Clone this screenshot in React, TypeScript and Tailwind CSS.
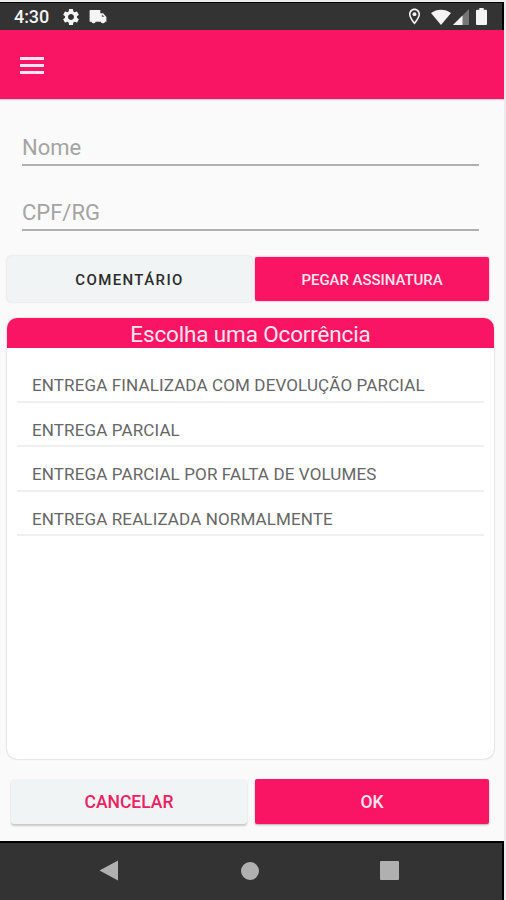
import React, { useState } from "react";
import { MdOutlineLocationOn, MdSettings } from "react-icons/md";

const ocorrencias = [
  "ENTREGA FINALIZADA COM DEVOLUÇÃO PARCIAL",
  "ENTREGA PARCIAL",
  "ENTREGA PARCIAL POR FALTA DE VOLUMES",
  "ENTREGA REALIZADA NORMALMENTE",
];

function StatusBar() {
  return (
    <div className="flex h-7 shrink-0 items-center border-t border-r-2 border-black bg-[#333333] text-[#f4f4f4]">
      <span className="ml-[14px] w-[47px] text-[18px] leading-7 font-medium tracking-[-0.1px]">
        4:30
      </span>
      <MdSettings className="size-5" />
      {/* caminhão */}
      <svg className="ml-2 h-[14px] w-[18px]" viewBox="0 0 18 15" fill="currentColor">
        <path d="M1 0H11.500V3.500H14.500L18 7.500V12.500H16.500A2.300 2.300 0 0 1 12 12.500H6.500A2.300 2.300 0 0 1 2 12.500H0V1Q0 0 1 0Z" />
        <path d="M13 5H14L16 7.500H13Z" fill="#777777" />
      </svg>
      <div className="mr-[15px] ml-auto flex items-center">
        <MdOutlineLocationOn className="mr-[7px] size-[19px]" />
        {/* Wi-Fi */}
        <svg className="h-4 w-5" viewBox="0 0 20 16" fill="currentColor">
          <path d="M0 4C5.500-0.500 14.500-0.500 20 4L10 16Z" />
        </svg>
        {/* sinal */}
        <svg className="ml-0.5 h-4 w-4" viewBox="0 0 16 16" fill="currentColor">
          <path d="M16 0V16H0Z" opacity="0.35" />
          <path d="M9.500 6.500V16H0Z" />
        </svg>
        {/* bateria */}
        <svg className="ml-[7px] h-[17px] w-[11px]" viewBox="0 0 11 17" fill="currentColor">
          <path d="M3.300 0H7.700V1.700H10Q11 1.700 11 2.700V16Q11 17 10 17H1Q0 17 0 16V2.700Q0 1.700 1 1.700H3.300Z" />
        </svg>
      </div>
    </div>
  );
}

function Campo({ placeholder }: { placeholder: string }) {
  const [valor, setValor] = useState("");
  return (
    <input
      value={valor}
      onChange={(e) => setValor(e.target.value)}
      placeholder={placeholder}
      className="block h-9 w-full border-b-2 border-[#b0b0b0] bg-transparent pt-0.5 pb-0.5 text-[22px] leading-7 outline-none placeholder:text-[#a4a4a4]"
    />
  );
}

export default function App() {
  return (
    <div className="h-[900px] w-[506px] overflow-hidden bg-[#ececee] pt-0.5 font-[Roboto,sans-serif]">
      <div className="flex h-full w-[504px] flex-col bg-[#fafafa]">
        <StatusBar />

        <header className="flex h-[69px] shrink-0 items-center bg-[#fa1464] shadow-[0_1px_1px_rgba(0,0,0,0.15)]">
          <button className="mt-0.5 ml-5 flex w-6 flex-col gap-1" aria-label="Menu">
            <span className="h-[3px] w-full bg-[#ffe6ee]" />
            <span className="h-[3px] w-full bg-[#ffe6ee]" />
            <span className="h-[3px] w-full bg-[#ffe6ee]" />
          </button>
        </header>

        <div className="flex flex-col gap-[29px] pt-[31px] pr-[25px] pl-[22px]">
          <Campo placeholder="Nome" />
          <Campo placeholder="CPF/RG" />
        </div>

        <div className="mt-[25px] flex items-start gap-[3px] pr-[15px] pl-[7px] text-[15px] font-medium">
          <button className="h-[46px] w-[245px] rounded-[4px] bg-[#f1f4f5] pt-0.5 tracking-[1.4px] text-[#2c2c2c] shadow-[0_0_2px_rgba(0,0,0,0.18)]">
            COMENTÁRIO
          </button>
          <button className="mt-px h-11 flex-1 rounded-[2px] bg-[#fa1464] pt-0.5 tracking-[-0.05px] text-[#ffe4ed] shadow-[0_0_2px_rgba(250,20,100,0.5)]">
            PEGAR ASSINATURA
          </button>
        </div>

        <section className="mt-4 mr-[10px] ml-[7px] h-[441px] overflow-hidden rounded-[10px] bg-white shadow-[0_0_2px_rgba(0,0,0,0.28)]">
          <h2 className="h-[30px] bg-[#fa1464] text-center text-[22.5px] leading-[33px] tracking-[-0.15px] text-[#ffe4ed]">
            Escolha uma Ocorrência
          </h2>
          <ul className="mt-[10px] mr-[10px] ml-[10px]">
            {ocorrencias.map((item) => (
              <li
                key={item}
                className="h-[44.5px] border-b-2 border-[#efefef] pt-[17px] pl-[15px] text-[17px] leading-5 tracking-[0.13px] text-[#666666]"
              >
                {item}
              </li>
            ))}
          </ul>
        </section>

        <div className="mt-5 flex gap-2 pr-[15px] pl-[11px] text-[17.5px] font-medium">
          <button className="h-[45px] w-[236px] rounded-[3px] bg-[#f1f4f5] pt-0.5 text-[#ec2163] shadow-[0_2px_2px_rgba(0,0,0,0.2)]">
            CANCELAR
          </button>
          <button className="h-[45px] flex-1 rounded-[2px] bg-[#fa1464] pt-0.5 text-[#ffe4ed] shadow-[0_1px_2px_rgba(0,0,0,0.3)]">
            OK
          </button>
        </div>

        <nav className="mt-auto flex h-[59px] items-center border-t-2 border-r-2 border-black bg-[#333333] pb-0.5 pl-[99px] text-[#b0b0b0]">
          <svg className="h-[21px] w-[19px]" viewBox="0 0 19 21" fill="currentColor">
            <path d="M19 0.500V20.500L0.500 10.500Z" />
          </svg>
          <span className="ml-[123px] size-[18px] rounded-full bg-[#b0b0b0]" />
          <span className="ml-[121px] size-[19px] rounded-[1px] bg-[#b0b0b0]" />
        </nav>
      </div>
    </div>
  );
}
